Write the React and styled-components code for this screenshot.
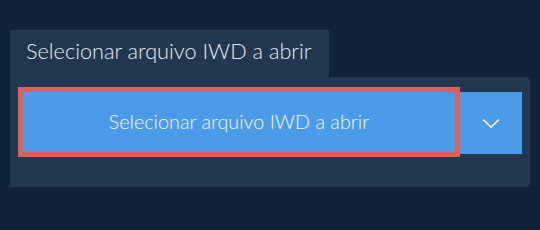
import React from 'react';
import styled, { createGlobalStyle } from 'styled-components';

const GlobalStyle = createGlobalStyle`
    html, body {
        margin: 0;
        padding: 0;
        background-color: #11233a;
    }
    body {
        font-family: Lato, "Noto Sans", sans-serif;
    }
`;

const Page = styled.div`
    width: 540px;
    height: 230px;
    box-sizing: border-box;
    padding: 30px 10px 0;
`;

const Tab = styled.div`
    display: flex;
    align-items: center;
    width: 319px;
    height: 47px;
    box-sizing: border-box;
    padding: 0 0 6px 16px;
    background-color: #233750;
    color: #e6eaf0;
    font-size: 21.7px;
    font-weight: 300;
`;

const Panel = styled.div`
    display: flex;
    align-items: flex-start;
    height: 110px;
    box-sizing: border-box;
    padding: 10px 8px 0;
    background-color: #233750;
`;

const OpenButton = styled.button`
    display: grid;
    place-content: center;
    width: 442px;
    height: 70px;
    box-sizing: border-box;
    border: 5px solid #df605b;
    background-color: #4c9be8;
    color: #f4f8fd;
    font-family: inherit;
    font-size: 19.8px;
    font-weight: 300;
    padding: 0 0 2px;
    cursor: pointer;
`;

const DropButton = styled.button`
    display: grid;
    place-content: center;
    width: 62px;
    height: 62px;
    margin-top: 5px;
    border: none;
    padding: 0;
    background-color: #4c9be8;
    color: #ffffff;
    cursor: pointer;
`;

function App() {
    return (
        <>
            <GlobalStyle />
            <Page>
                <Tab>Selecionar arquivo IWD a abrir</Tab>
                <Panel>
                    <OpenButton>Selecionar arquivo IWD a abrir</OpenButton>
                    <DropButton>
                        <svg width="18" height="10" viewBox="0 0 18 10">
                            <path d="M1 1.5 L9 9 L17 1.5" fill="none" stroke="currentColor" strokeWidth="1.5" />
                        </svg>
                    </DropButton>
                </Panel>
            </Page>
        </>
    );
}

export default App;
